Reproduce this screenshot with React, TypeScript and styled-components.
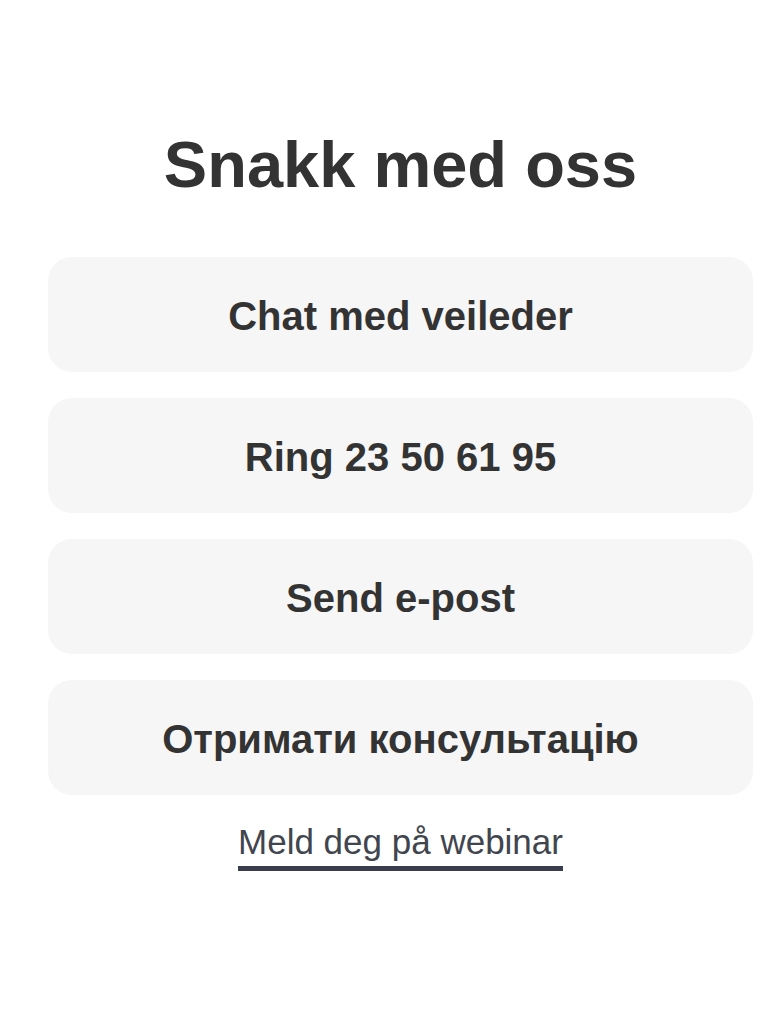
import React from "react";
import styled, { createGlobalStyle } from "styled-components";

const Global = createGlobalStyle`
  html, body { margin: 0; padding: 0; background: #ffffff; }
  body { font-family: "Liberation Sans", Arial, sans-serif; }
`;

const Page = styled.main`
  box-sizing: border-box;
  width: 767px;
  min-height: 1024px;
  padding: 127px 14px 0 48px;
  display: flex;
  flex-direction: column;
  align-items: stretch;
`;

const Title = styled.h1`
  margin: 0 0 54px;
  text-align: center;
  font-size: 65px;
  line-height: 76px;
  font-weight: 700;
  color: #333333;
`;

const List = styled.div`
  display: flex;
  flex-direction: column;
  gap: 26px;
`;

const Action = styled.button`
  height: 115px;
  border: none;
  border-radius: 24px;
  background: #f6f6f6;
  color: #333333;
  font-family: "Liberation Sans", Arial, sans-serif;
  font-size: 40px;
  font-weight: 700;
  display: flex;
  align-items: center;
  justify-content: center;
  padding: 3px 0 0;
  cursor: pointer;
`;

const LinkRow = styled.div`
  display: flex;
  justify-content: center;
  margin-top: 27px;
`;

const WebinarLink = styled.a`
  font-size: 35px;
  line-height: 40px;
  color: #41454e;
  text-decoration: none;
  border-bottom: 5px solid #3a3e4c;
  padding-bottom: 4px;
`;

const actions = [
  "Chat med veileder",
  "Ring 23 50 61 95",
  "Send e-post",
  "Отримати консультацію",
];

export default function App() {
  return (
    <>
      <Global />
      <Page>
        <Title>Snakk med oss</Title>
        <List>
          {actions.map((a) => (
            <Action key={a}>{a}</Action>
          ))}
        </List>
        <LinkRow>
          <WebinarLink href="#">Meld deg på webinar</WebinarLink>
        </LinkRow>
      </Page>
    </>
  );
}
